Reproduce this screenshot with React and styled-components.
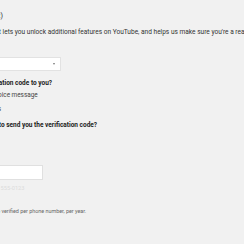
import React from "react";
import styled, { createGlobalStyle } from "styled-components";

const Global = createGlobalStyle`
  html, body { margin: 0; padding: 0; background: #f1f1f1; }
  body { width: 244px; height: 244px; overflow: hidden; font-family: Roboto, "Liberation Sans", Arial, sans-serif; }
`;

const Column = styled.div`
  margin-left: -64px;
  width: 700px;
  display: flex;
  flex-direction: column;
  align-items: flex-start;
  color: #333;
`;

const Title = styled.div`
  font-size: 7px;
  color: #222;
  line-height: 9px;
  margin-top: 12px;
  white-space: nowrap;
`;

const Body = styled.div`
  font-size: 6.55px;
  line-height: 8px;
  margin-top: 7px;
  white-space: nowrap;
`;

const Select = styled.div`
  margin-top: 21px;
  width: 125px;
  height: 14px;
  box-sizing: border-box;
  background: #fff;
  border: 1px solid #e2e2e2;
  display: flex;
  align-items: center;
  justify-content: flex-end;
  padding-right: 5px;
`;

const Arrow = styled.span`
  width: 0;
  height: 0;
  border-left: 1.5px solid transparent;
  border-right: 1.5px solid transparent;
  border-top: 2px solid #777;
`;

const Heading = styled.div`
  font-size: 6.5px;
  font-weight: bold;
  color: #222;
  line-height: 8px;
  white-space: nowrap;
  margin-top: ${(p) => p.$top}px;
`;

const Option = styled.label`
  display: flex;
  align-items: center;
  gap: 4px;
  font-size: 6.4px;
  line-height: 8px;
  white-space: nowrap;
  color: #444;
  margin-top: ${(p) => p.$top}px;
`;

const Radio = styled.span`
  width: 8px;
  height: 8px;
  box-sizing: border-box;
  border-radius: 50%;
  border: 1px solid #bbb;
  background: #fff;
  margin-left: 2px;
`;

const Input = styled.div`
  margin-top: 36px;
  width: 107px;
  height: 15px;
  box-sizing: border-box;
  background: #fff;
  border: 1px solid #e0e0e0;
`;

const Hint = styled.div`
  font-size: ${(p) => p.$size}px;
  line-height: 8px;
  white-space: nowrap;
  color: ${(p) => p.$color};
  margin-top: ${(p) => p.$top}px;
`;

export default function App() {
  return (
    <>
      <Global />
      <Column>
        <Title>Verifying (step 1 of 2)</Title>
        <Body>Verifying your account lets you unlock additional features on YouTube, and helps us make sure you're a real YouTube creator and not a robot.</Body>
        <Select>
          <Arrow />
        </Select>
        <Heading $top={8}>How do we get verification code to you?</Heading>
        <Option $top={4}>
          <Radio />
          Call me using a voice message
        </Option>
        <Option $top={6}>
          <Radio />
          Send me the texts
        </Option>
        <Heading $top={8}>What phone we'll use to send you the verification code?</Heading>
        <Input />
        <Hint $top={4} $size={5.7} $color="#dcdcdc">Add area code, e.g. (201) 555-0123</Hint>
        <Hint $top={15} $size={5.4} $color="#666">At most 2 accounts can be verified per phone number, per year.</Hint>
      </Column>
    </>
  );
}
